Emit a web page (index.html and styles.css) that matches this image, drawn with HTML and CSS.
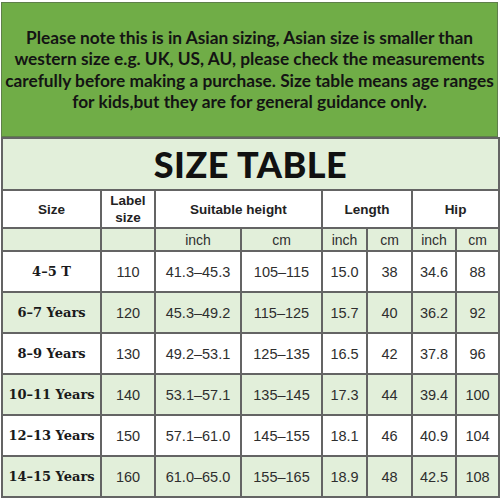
FILE: index.html
```html
<!DOCTYPE html>
<html>
<head>
<meta charset="utf-8">
<link rel="stylesheet" href="styles.css">
</head>
<body>
<div class="page">
  <div class="notice">
    <p>Please note this is in Asian sizing, Asian size is smaller than<br>western size e.g. UK, US, AU, please check the measurements<br>carefully before making a purchase. Size table means age ranges<br>for kids,but they are for general guidance only.</p>
  </div>
  <table class="sizes">
    <colgroup>
      <col class="c-size"><col class="c-label"><col class="c-hin"><col class="c-hcm">
      <col class="c-lin"><col class="c-lcm"><col class="c-pin"><col class="c-pcm">
    </colgroup>
    <tr class="title-row"><td colspan="8" class="title">SIZE TABLE</td></tr>
    <tr class="head-row">
      <th>Size</th>
      <th>Label<br>size</th>
      <th colspan="2">Suitable height</th>
      <th colspan="2">Length</th>
      <th colspan="2">Hip</th>
    </tr>
    <tr class="sub-row alt">
      <td></td><td></td><td>inch</td><td>cm</td><td>inch</td><td>cm</td><td>inch</td><td>cm</td>
    </tr>
    <tr class="data"><td class="age">4–5 T</td><td>110</td><td>41.3–45.3</td><td>105–115</td><td>15.0</td><td>38</td><td>34.6</td><td>88</td></tr>
    <tr class="data alt"><td class="age">6–7 Years</td><td>120</td><td>45.3–49.2</td><td>115–125</td><td>15.7</td><td>40</td><td>36.2</td><td>92</td></tr>
    <tr class="data"><td class="age">8–9 Years</td><td>130</td><td>49.2–53.1</td><td>125–135</td><td>16.5</td><td>42</td><td>37.8</td><td>96</td></tr>
    <tr class="data alt"><td class="age">10–11 Years</td><td>140</td><td>53.1–57.1</td><td>135–145</td><td>17.3</td><td>44</td><td>39.4</td><td>100</td></tr>
    <tr class="data"><td class="age">12–13 Years</td><td>150</td><td>57.1–61.0</td><td>145–155</td><td>18.1</td><td>46</td><td>40.9</td><td>104</td></tr>
    <tr class="data alt"><td class="age">14–15 Years</td><td>160</td><td>61.0–65.0</td><td>155–165</td><td>18.9</td><td>48</td><td>42.5</td><td>108</td></tr>
  </table>
</div>
</body>
</html>
```
FILE: styles.css
```css
html, body {
  margin: 0;
  padding: 0;
  background: #ffffff;
}
.page {
  width: 497px;
  margin: 2px 0 0 1px;
}
.notice {
  box-sizing: border-box;
  height: 135px;
  background: #70ad47;
  border: 1px solid #5f7f4a;
  display: flex;
  align-items: center;
  justify-content: center;
}
.notice p {
  margin: 0;
  text-align: center;
  white-space: nowrap;
  font-family: "Lato", "Open Sans", sans-serif;
  font-weight: 700;
  font-size: 17.3px;
  line-height: 21.5px;
  color: #141414;
}
.sizes {
  width: 497px;
  table-layout: fixed;
  border-collapse: collapse;
  font-family: "Liberation Sans Narrow", "Liberation Sans", sans-serif;
  color: #2e2e2e;
}
.c-size { width: 99px; }
.c-label { width: 54px; }
.c-hin { width: 86px; }
.c-hcm { width: 81px; }
.c-lin { width: 45px; }
.c-lcm { width: 45px; }
.c-pin { width: 44px; }
.c-pcm { width: 43px; }
.sizes td, .sizes th {
  border: 2px solid #646464;
  padding: 0;
  text-align: center;
  vertical-align: middle;
}
.title-row td {
  height: 50px;
  background: #e2efda;
  font-family: "Lato", "Open Sans", sans-serif;
  font-weight: 900;
  font-size: 36px;
  color: #111;
  letter-spacing: 0.5px;
}
.head-row th {
  height: 36px;
  font-family: "Liberation Sans", sans-serif;
  font-weight: 700;
  font-size: 13.5px;
  line-height: 17px;
  color: #222;
}
.sub-row td {
  height: 21px;
  font-size: 14px;
}
.data td {
  height: 39px;
  font-size: 14.5px;
}
.alt td {
  background: #e2efda;
}
.data td.age {
  font-family: "DejaVu Serif", "Liberation Serif", serif;
  font-weight: 700;
  font-size: 13px;
  color: #1a1a1a;
}
```
